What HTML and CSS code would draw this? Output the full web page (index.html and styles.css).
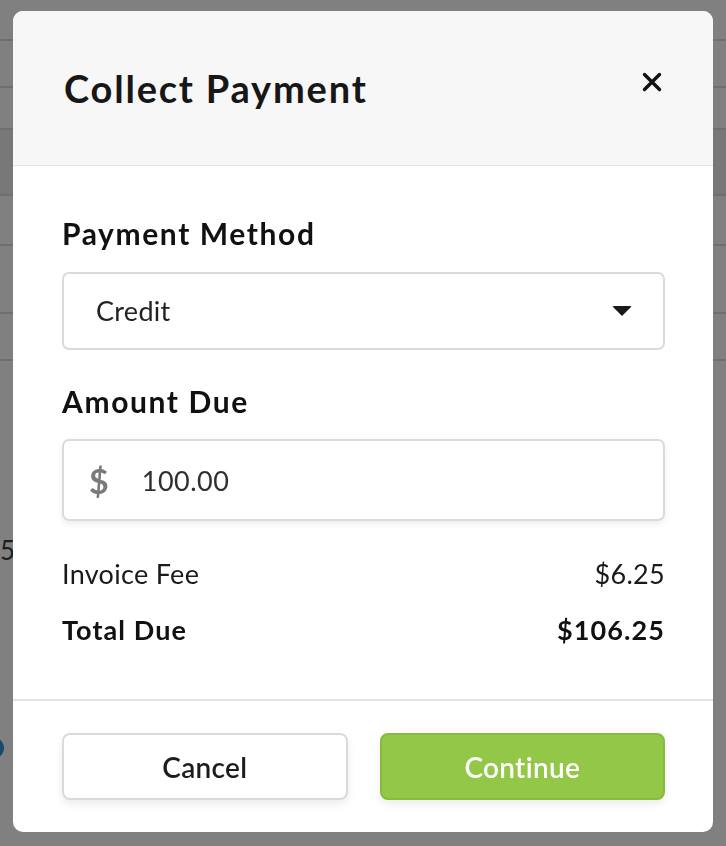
FILE: index.html
```html
<!DOCTYPE html>
<html lang="en">
<head>
    <meta charset="UTF-8">
    <meta name="viewport" content="width=device-width, initial-scale=1.0">
    <title>Collect Payment</title>
    <link rel="stylesheet" href="styles.css">
</head>
<body>
    <!-- page behind the dialog -->
    <div class="page">
        <div class="page-row row-a"></div>
        <div class="page-row row-b"></div>
        <div class="page-row row-c"></div>
        <div class="page-row row-d"></div>
        <div class="page-row row-e"></div>
        <div class="page-row row-f"></div>
        <div class="page-row row-g"></div>
        <div class="page-num">5</div>
        <div class="page-dot"></div>
    </div>

    <div class="overlay">
        <div class="modal">
            <div class="modal-header">
                <h2 class="modal-title">Collect Payment</h2>
                <button class="close-btn" aria-label="Close">
                    <svg width="20" height="20" viewBox="0 0 20 20">
                        <path d="M2.5 2.5 L17.5 17.5 M17.5 2.5 L2.5 17.5" stroke="#111" stroke-width="3.4" stroke-linecap="round"/>
                    </svg>
                </button>
            </div>

            <div class="modal-body">
                <label class="field-label">Payment Method</label>
                <div class="select-box">
                    <span class="select-value">Credit</span>
                    <span class="caret"></span>
                </div>

                <label class="field-label amount-label">Amount Due</label>
                <div class="input-box">
                    <span class="currency">$</span>
                    <span class="input-value">100.00</span>
                </div>

                <div class="summary">
                    <div class="summary-row">
                        <span>Invoice Fee</span>
                        <span>$6.25</span>
                    </div>
                    <div class="summary-row total">
                        <span>Total Due</span>
                        <span>$106.25</span>
                    </div>
                </div>
            </div>

            <div class="modal-footer">
                <button class="btn btn-cancel">Cancel</button>
                <button class="btn btn-continue">Continue</button>
            </div>
        </div>
    </div>
</body>
</html>
```

FILE: styles.css
```css
:root {
    --overlay-color: #808080;
    --line-color: #6f6f6f;
    --header-bg: #f7f7f7;
    --divider: #e3e3e3;
    --field-border: #dadada;
    --text-color: #151515;
    --muted: #7a7a7a;
    --green: #93c747;
    --green-border: #86bb3b;
}

* {
    box-sizing: border-box;
}

body {
    margin: 0;
    height: 846px;
    overflow: hidden;
    font-family: 'Lato', 'Noto Sans', sans-serif;
    background-color: var(--overlay-color);
    color: var(--text-color);
}

/* faded page behind the dialog */
.page {
    position: relative;
    height: 846px;
}

.page-row {
    border-bottom: 2px solid var(--line-color);
}

.row-a { height: 41px; }
.row-b { height: 47px; }
.row-c { height: 42px; }
.row-d { height: 66px; background: #787878; }
.row-e { height: 50px; }
.row-f { height: 68px; }
.row-g { height: 47px; }

.page-num {
    position: absolute;
    left: 0;
    top: 534px;
    font-size: 26px;
    color: #1d1d1d;
}

.page-dot {
    position: absolute;
    left: -10px;
    top: 739px;
    width: 14px;
    height: 18px;
    border-radius: 50%;
    background: #164a6e;
}

/* dialog */
.overlay {
    position: fixed;
    inset: 0;
    padding: 11px 13px 0 13px;
}

.modal {
    width: 700px;
    height: 821px;
    background: #fff;
    border-radius: 10px;
    overflow: hidden;
    display: flex;
    flex-direction: column;
}

.modal-header {
    height: 155px;
    background: var(--header-bg);
    border-bottom: 1px solid var(--divider);
    display: flex;
    align-items: center;
    justify-content: space-between;
    padding: 0 51px 4px 51px;
}

.modal-title {
    margin: 0;
    font-size: 38px;
    font-weight: 700;
    letter-spacing: 1.8px;
    color: #171717;
    margin-top: 4px;
}

.close-btn {
    border: none;
    background: none;
    padding: 0;
    width: 20px;
    height: 20px;
    margin-bottom: 8px;
    cursor: pointer;
}

.modal-body {
    flex: 1;
    padding: 49px 48px 0 49px;
    display: flex;
    flex-direction: column;
}

.field-label {
    font-size: 30px;
    line-height: 36px;
    font-weight: 700;
    letter-spacing: 1.6px;
    color: #111;
}

.select-box {
    margin-top: 21px;
    height: 78px;
    border: 2px solid var(--field-border);
    border-radius: 7px;
    display: flex;
    align-items: center;
    justify-content: space-between;
    padding: 0 31px 0 32px;
}

.select-value {
    font-size: 27px;
    letter-spacing: 0.3px;
    color: #222;
    margin-top: -2px;
}

.caret {
    width: 0;
    height: 0;
    border-left: 10px solid transparent;
    border-right: 10px solid transparent;
    border-top: 10px solid #1a1a1a;
    border-radius: 2px;
}

.amount-label {
    margin-top: 33px;
}

.input-box {
    margin-top: 20px;
    height: 82px;
    border: 2px solid var(--field-border);
    border-radius: 7px;
    box-shadow: 0 3px 6px rgba(0, 0, 0, 0.07);
    display: flex;
    align-items: center;
    padding: 0 0 0 25px;
    gap: 33px;
}

.currency {
    font-size: 34px;
    font-weight: 700;
    color: var(--muted);
}

.input-value {
    font-size: 27px;
    letter-spacing: 0.5px;
    color: #2f2f2f;
}

.summary {
    margin-top: 36px;
    display: flex;
    flex-direction: column;
    gap: 22px;
}

.summary-row {
    display: flex;
    justify-content: space-between;
    font-size: 27px;
    line-height: 34px;
    letter-spacing: 0.3px;
    color: #1a1a1a;
}

.summary-row.total {
    font-weight: 700;
    letter-spacing: 1.1px;
    color: #111;
}

.modal-footer {
    height: 133px;
    border-top: 2px solid var(--divider);
    display: grid;
    grid-template-columns: 1fr 1fr;
    gap: 32px;
    padding: 32px 48px 0 49px;
    align-items: start;
}

.btn {
    height: 67px;
    border-radius: 8px;
    font-family: inherit;
    font-size: 28px;
    font-weight: 600;
    letter-spacing: 0.3px;
    cursor: pointer;
}

.btn-cancel {
    background: #fff;
    border: 2px solid var(--field-border);
    color: #1c1c1c;
    box-shadow: 0 4px 8px rgba(0, 0, 0, 0.08);
}

.btn-continue {
    background: var(--green);
    border: 2px solid var(--green-border);
    color: #fff;
    box-shadow: 0 4px 8px rgba(0, 0, 0, 0.08);
}
```
